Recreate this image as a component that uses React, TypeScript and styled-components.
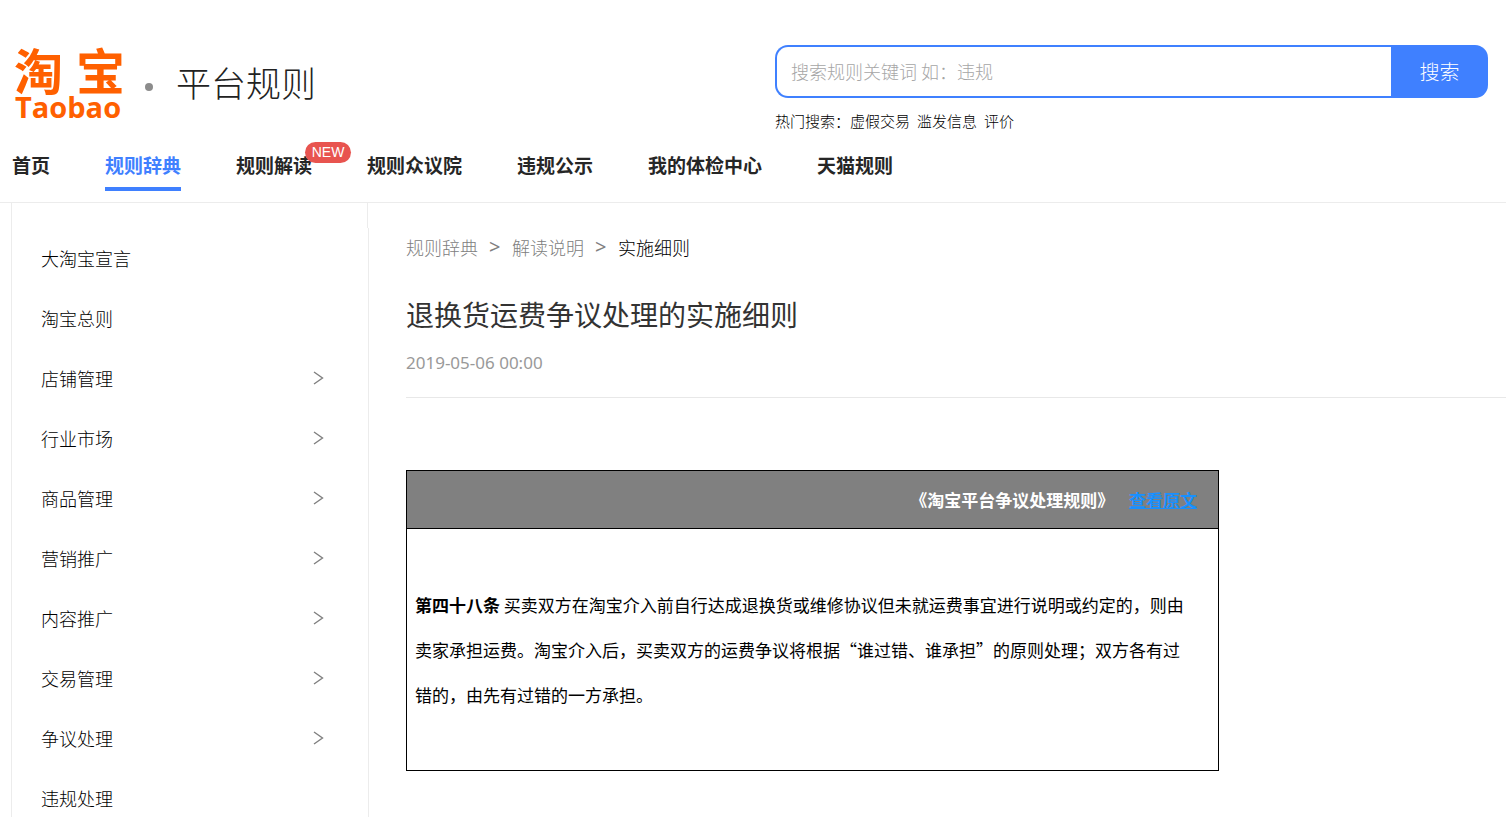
import React from 'react';
import styled, { createGlobalStyle, css } from 'styled-components';

const sans = "'Noto Sans', 'Noto Sans CJK SC', sans-serif";
const cjk = "'Noto Sans CJK SC', sans-serif";

const GlobalStyle = createGlobalStyle`
  *, *::before, *::after { box-sizing: border-box; }
  body { margin: 0; background: #fff; color: #262626; font-family: ${sans}; }
  a { color: inherit; text-decoration: none; }
  ul, ol { list-style: none; margin: 0; padding: 0; }
`;

const Header = styled.header`
  border-bottom: 1px solid #ececec;
`;

const HeaderTop = styled.div`
  display: flex;
  justify-content: space-between;
  align-items: flex-start;
  gap: 24px;
  padding: 45px 18px 0 14px;
`;

const Brand = styled.div`
  display: flex;
  align-items: center;
  height: 76px;
`;

const Logo = styled.a`
  display: flex;
  flex-direction: column;
  width: 111px;
  color: #ff6000;
`;

const LogoHan = styled.span`
  display: flex;
  justify-content: space-between;
  font: 700 49px/48px ${cjk};
`;

const LogoLatin = styled.span`
  padding-left: 1px;
  font: 700 29px/28px 'Open Sans', ${sans};
`;

const Dot = styled.span`
  width: 8px;
  height: 8px;
  margin: 8px 23px 0 20px;
  border-radius: 50%;
  background: #8c8c8c;
`;

const SiteName = styled.span`
  padding-bottom: 2px;
  font: 300 35px/40px ${cjk};
  color: #222;
`;

const SearchArea = styled.div`
  width: 713px;
  min-width: 0;
`;

const SearchForm = styled.form`
  display: flex;
  height: 53px;
`;

const SearchInput = styled.input`
  flex: 1;
  min-width: 0;
  padding: 0 14px 2px;
  border: 2px solid #3f80ff;
  border-right: 0;
  border-radius: 13px 0 0 13px;
  outline: 0;
  font: 300 18px/26px ${cjk};
  color: #333;
  &::placeholder { color: #a6a6a6; opacity: 1; }
`;

const SearchButton = styled.button`
  width: 97px;
  border: 0;
  border-radius: 0 13px 13px 0;
  background: #3f80ff;
  color: #fff;
  font: 300 20px/26px ${cjk};
  cursor: pointer;
`;

const HotSearch = styled.div`
  display: flex;
  gap: 7px;
  margin-top: 12px;
  font: 300 15px/22px ${cjk};
  color: #000;
`;

const HotLabel = styled.span`
  margin-right: -7px;
`;

const MainNav = styled.nav`
  padding-left: 12px;
`;

const NavList = styled.ul`
  display: flex;
  gap: 55px;
  height: 62px;
  margin-top: 8px;
  padding-top: 9px;
`;

const NavLink = styled.a<{ $active?: boolean }>`
  position: relative;
  display: block;
  height: 42px;
  padding-top: 2px;
  border-bottom: 4px solid transparent;
  font: 700 19px/28px ${cjk};
  white-space: nowrap;
  ${(p) => p.$active && css`color: #3f80ff; border-color: #3f80ff;`}
`;

const NewBadge = styled.span`
  position: absolute;
  top: -7px;
  left: 69px;
  width: 46px;
  height: 21px;
  border-radius: 11px;
  background: #e8544f;
  color: #fff;
  font: 400 14px/21px 'Liberation Sans', sans-serif;
  text-align: center;
`;

const Page = styled.div`
  display: flex;
  padding-left: 11px;
`;

const Sidebar = styled.aside`
  flex: none;
  width: 358px;
`;

const SidebarCap = styled.div`
  width: 357px;
  height: 25px;
  border: solid #ececec;
  border-width: 0 1px;
`;

const Menu = styled.ul`
  border: solid #ececec;
  border-width: 0 1px;
`;

const MenuLink = styled.a`
  display: flex;
  align-items: center;
  justify-content: space-between;
  height: 60px;
  padding: 0 44px 0 29px;
  font: 300 18px/26px ${cjk};
  color: #000;
`;

const Article = styled.main`
  flex: 1;
  min-width: 0;
  padding: 30px 0 40px 37px;
`;

const Crumbs = styled.ol`
  display: flex;
  gap: 11px;
  font: 300 18px/28px ${cjk};
  color: #808080;
`;

const Crumb = styled.li<{ $current?: boolean }>`
  ${(p) => p.$current && css`color: #000;`}
`;

const CrumbArrow = styled.li`
  width: 12px;
  font: 400 20px/28px ${sans};
`;

const Title = styled.h1`
  margin: 33px 0 0;
  font: 400 28px/40px ${cjk};
  color: #333;
`;

const Meta = styled.div`
  padding: 17px 0 22px;
  border-bottom: 1px solid #e8e8e8;
  font: 400 17px/24px ${sans};
  color: #999;
`;

const RuleTable = styled.table`
  width: 813px;
  max-width: 100%;
  margin-top: 72px;
  border-collapse: collapse;
  color: #000;
`;

const RuleHead = styled.th`
  height: 58px;
  padding: 0 21px 0 8px;
  border: 1px solid #000;
  background: #808080;
  color: #fff;
  font: 700 17px/28px ${cjk};
  text-align: right;
`;

const SourceLink = styled.a`
  margin-left: 11px;
  color: #1890ff;
  text-decoration: underline;
`;

const RuleBody = styled.td`
  padding: 53px 24px 53px 8px;
  border: 1px solid #000;
  font: 400 17px/45px ${cjk};
`;

const Chevron = () => (
  <svg width="11" height="14" viewBox="0 0 11 14" fill="none" stroke="#808080" strokeWidth="1.4" aria-hidden="true">
    <path d="M1 1L9.5 7L1 13" />
  </svg>
);

const navItems = [
  { label: '首页' },
  { label: '规则辞典', active: true },
  { label: '规则解读', isNew: true },
  { label: '规则众议院' },
  { label: '违规公示' },
  { label: '我的体检中心' },
  { label: '天猫规则' },
];

const menuItems = [
  { label: '大淘宝宣言' },
  { label: '淘宝总则' },
  { label: '店铺管理', nested: true },
  { label: '行业市场', nested: true },
  { label: '商品管理', nested: true },
  { label: '营销推广', nested: true },
  { label: '内容推广', nested: true },
  { label: '交易管理', nested: true },
  { label: '争议处理', nested: true },
  { label: '违规处理' },
];

export default function App() {
  return (
    <>
      <GlobalStyle />
      <Header>
        <HeaderTop>
          <Brand>
            <Logo href="#">
              <LogoHan><span>淘</span><span>宝</span></LogoHan>
              <LogoLatin>Taobao</LogoLatin>
            </Logo>
            <Dot />
            <SiteName>平台规则</SiteName>
          </Brand>
          <SearchArea>
            <SearchForm onSubmit={(e) => e.preventDefault()}>
              <SearchInput type="text" aria-label="搜索" placeholder="搜索规则关键词 如：违规" />
              <SearchButton type="submit">搜索</SearchButton>
            </SearchForm>
            <HotSearch>
              <HotLabel>热门搜索：</HotLabel>
              <a href="#">虚假交易</a>
              <a href="#">滥发信息</a>
              <a href="#">评价</a>
            </HotSearch>
          </SearchArea>
        </HeaderTop>
        <MainNav>
          <NavList>
            {navItems.map((item) => (
              <li key={item.label}>
                <NavLink href="#" $active={item.active}>
                  {item.label}
                  {item.isNew && <NewBadge>NEW</NewBadge>}
                </NavLink>
              </li>
            ))}
          </NavList>
        </MainNav>
      </Header>
      <Page>
        <Sidebar>
          <SidebarCap />
          <Menu>
            {menuItems.map((item) => (
              <li key={item.label}>
                <MenuLink href="#">
                  {item.label}
                  {item.nested && <Chevron />}
                </MenuLink>
              </li>
            ))}
          </Menu>
        </Sidebar>
        <Article>
          <Crumbs>
            <Crumb><a href="#">规则辞典</a></Crumb>
            <CrumbArrow aria-hidden="true">&gt;</CrumbArrow>
            <Crumb><a href="#">解读说明</a></Crumb>
            <CrumbArrow aria-hidden="true">&gt;</CrumbArrow>
            <Crumb $current>实施细则</Crumb>
          </Crumbs>
          <Title>退换货运费争议处理的实施细则</Title>
          <Meta>2019-05-06 00:00</Meta>
          <RuleTable>
            <thead>
              <tr>
                <RuleHead>
                  《淘宝平台争议处理规则》 <SourceLink href="#">查看原文</SourceLink>
                </RuleHead>
              </tr>
            </thead>
            <tbody>
              <tr>
                <RuleBody>
                  <strong>第四十八条</strong> 买卖双方在淘宝介入前自行达成退换货或维修协议但未就运费事宜进行说明或约定的，则由卖家承担运费。淘宝介入后，买卖双方的运费争议将根据“谁过错、谁承担”的原则处理；双方各有过错的，由先有过错的一方承担。
                </RuleBody>
              </tr>
            </tbody>
          </RuleTable>
        </Article>
      </Page>
    </>
  );
}
